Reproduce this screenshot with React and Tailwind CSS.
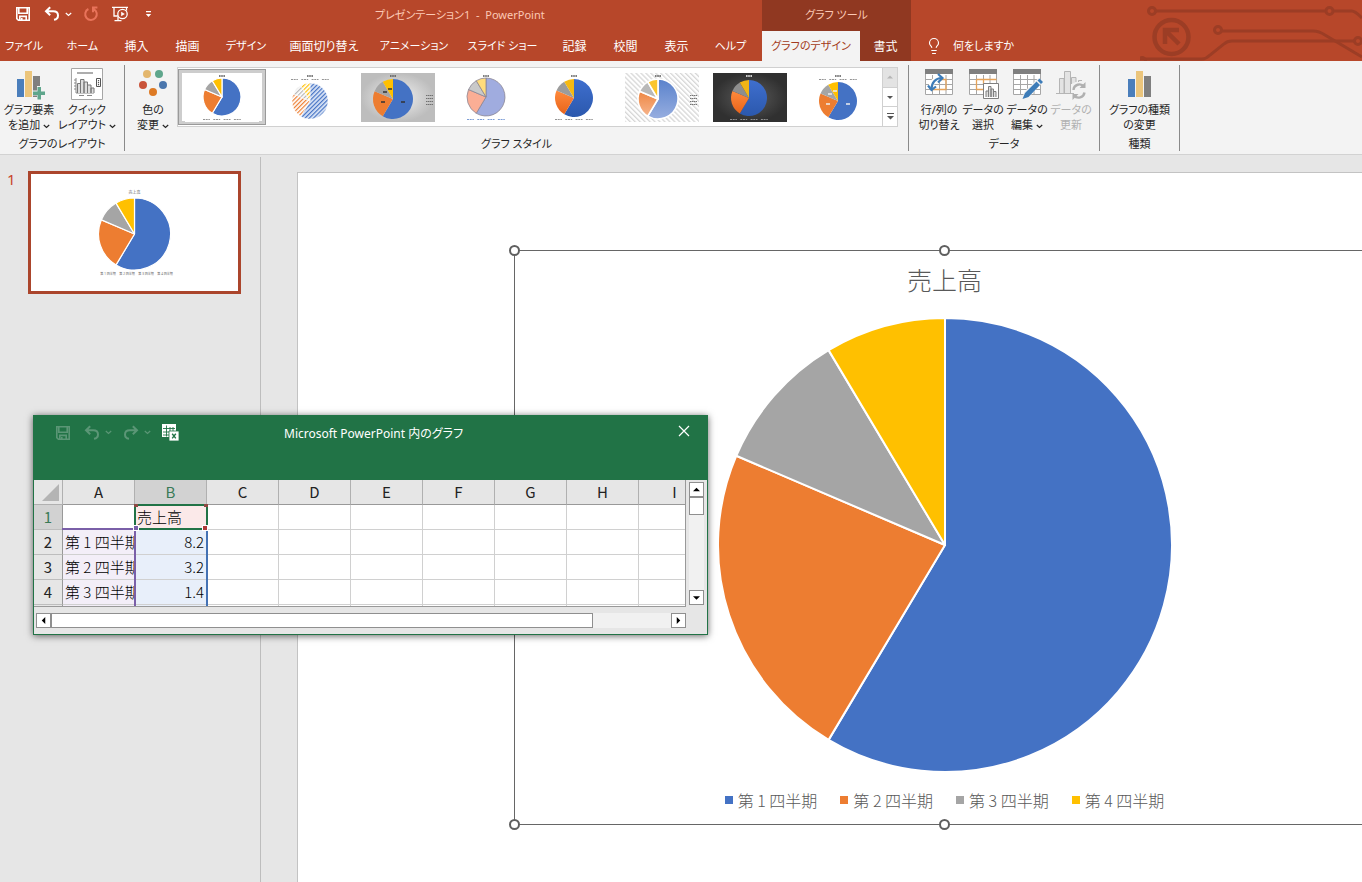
import { useState } from 'react';
import clsx from 'clsx';
import { Lightbulb } from 'lucide-react';

const SERIES = [
  { label: '第 1 四半期', value: 8.2 },
  { label: '第 2 四半期', value: 3.2 },
  { label: '第 3 四半期', value: 1.4 },
  { label: '第 4 四半期', value: 1.2 },
];
const COLORS = ['#4472c4', '#ed7d31', '#a5a5a5', '#ffc000'];
const SWATCHES = ['bg-[#4472c4]', 'bg-[#ed7d31]', 'bg-[#a5a5a5]', 'bg-[#ffc000]'];

// kana labels are set one size smaller than kanji ones
const TABS = [
  { label: 'ファイル', width: 'w-[48px]', kana: true },
  { label: 'ホーム', width: 'w-[69px]', kana: true },
  { label: '挿入', width: 'w-[39px]' },
  { label: '描画', width: 'w-[63px]' },
  { label: 'デザイン', width: 'w-[54px]', kana: true },
  { label: '画面切り替え', width: 'w-[102px]' },
  { label: 'アニメーション', width: 'w-[78px]', kana: true },
  { label: 'スライド ショー', width: 'w-[99px]', kana: true },
  { label: '記録', width: 'w-[45px]' },
  { label: '校閲', width: 'w-[57px]' },
  { label: '表示', width: 'w-[45px]' },
  { label: 'ヘルプ', width: 'w-[63px]', kana: true },
];

function slicePath(cx, cy, r, start, end) {
  const at = (t) => {
    const a = t * 2 * Math.PI;
    return `${(cx + r * Math.sin(a)).toFixed(2)} ${(cy - r * Math.cos(a)).toFixed(2)}`;
  };
  return `M${cx} ${cy}L${at(start)}A${r} ${r} 0 ${end - start > 0.5 ? 1 : 0} 1 ${at(end)}Z`;
}

function Pie({ cx, cy, r, fills = COLORS, stroke = '#fff', strokeWidth = 1 }) {
  const total = SERIES.reduce((sum, s) => sum + s.value, 0);
  let acc = 0;
  return (
    <g stroke={stroke} strokeWidth={strokeWidth} strokeLinejoin="round">
      {SERIES.map((s, i) => {
        const start = acc / total;
        acc += s.value;
        return <path key={s.label} d={slicePath(cx, cy, r, start, acc / total)} fill={fills[i]} />;
      })}
    </g>
  );
}

/* ---------- Chart style gallery ---------- */

const STYLES = [
  { cx: 37, cy: 24, r: 19, stroke: '#fff', sw: 1.2, legend: 'bottom' },
  { cx: 37, cy: 28, r: 18, stroke: '#fff', sw: 0.5, legend: 'top', fills: ['url(#h0)', 'url(#h1)', 'url(#h2)', 'url(#h3)'] },
  { cx: 32, cy: 26, r: 20, stroke: 'none', sw: 0, legend: 'right', bg: 'url(#grayBg)', tags: '#333' },
  { cx: 37, cy: 24, r: 19, stroke: '#8c8794', sw: 0.8, legend: 'bottom', legendColor: '#4472c4', fills: ['#a0acdf', '#fbae95', '#c9c9c9', '#ffdc7c'] },
  { cx: 37, cy: 25, r: 19, stroke: 'none', sw: 0, legend: 'bottom', fills: ['url(#g0)', 'url(#g1)', '#9c9c9c', '#f5b913'] },
  { cx: 33, cy: 26, r: 20, stroke: '#fff', sw: 1.6, legend: 'right', bg: 'url(#lightHatch)', fills: ['url(#s0)', 'url(#s1)', '#b9b9b9', '#fbc52c'] },
  { cx: 36, cy: 25, r: 18, stroke: 'none', sw: 0, legend: 'bottom', legendColor: '#bbb', titleColor: '#fff', bg: 'url(#darkBg)', fills: ['url(#g0)', 'url(#g1)', '#8e8e8e', '#f0b416'] },
  { cx: 37, cy: 28, r: 19, stroke: 'none', sw: 0, legend: 'top', tags: '#eee' },
];

const Hatch = ({ id, color, back = '#fff' }) => (
  <pattern id={id} width="3" height="3" patternUnits="userSpaceOnUse" patternTransform="rotate(45)">
    <rect width="3" height="3" fill={back} />
    <rect width="1.2" height="3" fill={color} />
  </pattern>
);

const Fade = ({ id, from, to }) => (
  <linearGradient id={id} x1="0" y1="0" x2="0" y2="1">
    <stop offset="0" stopColor={from} />
    <stop offset="1" stopColor={to} />
  </linearGradient>
);

function GalleryDefs() {
  return (
    <svg width="0" height="0" className="absolute" aria-hidden="true">
      <defs>
        <Hatch id="h0" color="#4472c4" back="#dce6f7" />
        <Hatch id="h1" color="#ed7d31" />
        <Hatch id="h2" color="#b5b5b5" />
        <Hatch id="h3" color="#ffc000" />
        <pattern id="lightHatch" width="3.5" height="3.5" patternUnits="userSpaceOnUse" patternTransform="rotate(-45)">
          <rect width="3.5" height="3.5" fill="#fff" />
          <rect width="1.3" height="3.5" fill="#d6d6d6" />
        </pattern>
        <radialGradient id="grayBg">
          <stop offset="0" stopColor="#f2f2f2" />
          <stop offset="1" stopColor="#bdbdbd" />
        </radialGradient>
        <radialGradient id="darkBg">
          <stop offset="0" stopColor="#5c5c5c" />
          <stop offset="1" stopColor="#303030" />
        </radialGradient>
        <Fade id="g0" from="#3f6fce" to="#2b58ad" />
        <Fade id="g1" from="#ff8a3c" to="#e8641b" />
        <Fade id="s0" from="#5a82cc" to="#97aee0" />
        <Fade id="s1" from="#ee8743" to="#f6b48c" />
      </defs>
    </svg>
  );
}

function StyleThumb({ s }) {
  const lc = s.legendColor || '#666';
  return (
    <svg width="74" height="49" viewBox="0 0 74 49" aria-hidden="true">
      <rect width="74" height="49" fill={s.bg || '#fff'} />
      <path d={`M${s.cx - 3} 3h6`} stroke={s.titleColor || '#555'} strokeWidth="1.3" strokeDasharray="1.6 .6" />
      <Pie cx={s.cx} cy={s.cy} r={s.r} fills={s.fills} stroke={s.stroke} strokeWidth={s.sw} />
      {s.legend === 'bottom' && <path d={`M${s.cx - 19} 46.5h38`} stroke={lc} strokeWidth=".7" strokeDasharray="2 .7 2 .7 1.500 3.400" />}
      {s.legend === 'top' && <path d={`M${s.cx - 19} 6.5h38`} stroke={lc} strokeWidth=".7" strokeDasharray="2 .7 2 .7 1.500 3.400" />}
      {s.legend === 'right' && <path d="M65 22.500h7M65 25.500h7M65 28.500h7M65 31.500h7" stroke={lc} strokeWidth=".9" strokeDasharray="1.500 .5" />}
      {s.tags && (
        <path
          d={`M${s.cx + 8} ${s.cy + 3}h4M${s.cx - 12} ${s.cy + 3}h4M${s.cx - 10} ${s.cy - 7}h4M${s.cx - 5} ${s.cy - 10}h4`}
          stroke={s.tags}
          strokeWidth="1.400"
        />
      )}
    </svg>
  );
}

/* ---------- Icons ---------- */

const SaveIcon = () => (
  <svg width="16" height="16" viewBox="0 0 16 16" fill="none" stroke="currentColor" strokeWidth="1.6">
    <path d="M1.8 1.8h12.4v12.4H3.4l-1.6-1.6zM3.8 2v5.2h8.4V2M4.8 14v-3.6h6.4V14M6.8 12v2.4" />
  </svg>
);

const UndoIcon = () => (
  <svg width="16" height="16" viewBox="0 0 16 16" fill="none" stroke="currentColor" strokeWidth="2">
    <path d="M6.2 1.2L2 5.2l4.2 4M2.4 5.2h6.8c3 0 4.8 1.8 4.8 4.2s-1.8 4-4 4.4" />
  </svg>
);

const RedoIcon = () => (
  <svg width="16" height="16" viewBox="0 0 16 16" fill="none" stroke="currentColor" strokeWidth="2">
    <path d="M9.8 1.2L14 5.2l-4.2 4M13.6 5.2H6.8C3.8 5.2 2 7 2 9.4s1.8 4 4 4.4" />
  </svg>
);

const RepeatIcon = () => (
  <svg width="16" height="16" viewBox="0 0 16 16" fill="none" stroke="currentColor" strokeWidth="2">
    <path d="M5.4 3A5.8 5.8 0 1 0 10.8 3.1M14.4 1.4H10v4.8" />
  </svg>
);

const PresentIcon = () => (
  <svg width="18" height="16" viewBox="0 0 18 16" fill="none" stroke="currentColor" strokeWidth="1.3">
    <path d="M1 1.3h16M3 1.5v8.5h4M3.5 14.6h7M7 11v3.5M15.5 1.500v3" />
    <circle cx="11.5" cy="8" r="4.7" />
    <path d="M10.2 5.8l3.6 2.2-3.6 2.2z" fill="currentColor" stroke="none" />
  </svg>
);

const CustomizeIcon = () => (
  <svg width="7" height="8" viewBox="0 0 7 8" fill="currentColor">
    <path d="M1 1h5v1.2H1zM.8 4h5.4L3.5 7z" />
  </svg>
);

const Chevron = () => (
  <svg width="7" height="5" viewBox="0 0 7 5" fill="none" stroke="currentColor" strokeWidth="1.2" className="inline-block">
    <path d="M.8 1l2.7 2.5L6.2 1" />
  </svg>
);

const GridGoIcon = () => (
  <svg width="17" height="17" viewBox="0 0 17 17" fill="none">
    <path d="M0 0h14v13H0z" fill="#fff" />
    <path d="M1 4.500h12M1 8h12M1 11h12M4.500 1.500v11M8 3v9M11 3v9" stroke="#217346" strokeWidth=".9" />
    <path d="M7 7h10v10H7z" fill="#fff" stroke="#217346" strokeWidth=".8" />
    <path d="M10.200 9.800l3.600 4.600M13.800 9.800l-3.600 4.600" stroke="#217346" strokeWidth="1.400" />
  </svg>
);

const Bars = () => (
  <>
    <path d="M4 11h7v18H4z" fill="#4a7ebb" />
    <path d="M12 3h7v26h-7z" fill="#ebc57c" />
    <path d="M20 8h7v21h-7z" fill="#7f7f7f" />
  </>
);

const BarsIcon = () => (
  <svg width="32" height="32" viewBox="0 0 32 32"><Bars /></svg>
);

const AddElementIcon = () => (
  <svg width="32" height="32" viewBox="0 0 32 32">
    <Bars />
    <path d="M24 18h5v4.500h4v5h-4V32h-5v-4.500h-4v-5h4z" fill="#f3f3f3" />
    <path d="M24.500 19H28v4.500h4v3.500h-4v4.500h-3.500V27H20v-3.500h4.500z" fill="#5fa68c" />
  </svg>
);

const QuickLayoutIcon = () => (
  <svg width="32" height="32" viewBox="0 0 32 32" fill="none">
    <path d="M.5.500h31v31H.5z" fill="#fff" stroke="#a6a6a6" />
    <path d="M6 5h16" stroke="#999" strokeWidth="1.600" />
    <path d="M5 10v15h18M3 12h2M3 15h2M3 18h2M3 21h2M8 27.500h5M16 27.500h5" stroke="#888" />
    <path d="M6.500 25V15.500h3V25M9.500 25V11.500h3.500V25M13 25V14h3.500v11M16.500 25v-8H20v8M20 25v-5h3v5" fill="#ddd" stroke="#777" />
    <path d="M25.500 10.500h4v8h-4z" fill="#fff" stroke="#555" />
    <path d="M27.500 12v1.200M27.500 14v1.200M27.500 16v1.200" stroke="#555" strokeWidth="1.200" />
  </svg>
);

const PaletteIcon = () => (
  <svg width="32" height="32" viewBox="0 0 32 32">
    <circle cx="10" cy="6" r="4" fill="#e3b66c" />
    <circle cx="22" cy="6" r="4" fill="#5fa68c" />
    <circle cx="6" cy="17" r="4" fill="#c9533a" />
    <circle cx="26" cy="17" r="4" fill="#4a76ac" />
    <circle cx="16" cy="24" r="4" fill="#dd7a24" />
  </svg>
);

const TableBase = () => (
  <>
    <path d="M2 2h28v25H2z" fill="#fff" />
    <path d="M2.500 6v20.500h27V6M2.500 11.500h27M2.500 16.500h27M2.500 21.500h27M9.500 7v19M16.500 7v19M23 7v19" fill="none" stroke="#a6a6a6" />
    <path d="M2 1h28v5H2z" fill="#7f7f7f" />
  </>
);

const SwitchIcon = () => (
  <svg width="32" height="32" viewBox="0 0 32 32" fill="none">
    <TableBase />
    <path d="M9.500 11.500h13.500v10H9.500z" stroke="#e5a35a" strokeWidth="1.300" />
    <path d="M7.500 21C8 14 12.500 10.500 18 10.500" stroke="#fff" strokeWidth="5" />
    <path d="M8.500 21c0-6 4-11 10-11" stroke="#3d7cb8" strokeWidth="2.200" />
    <path d="M15 6l4.500 4-4.500 4.500M5 17.500L8.500 22l4.500-3.500" stroke="#3d7cb8" strokeWidth="2.200" />
  </svg>
);

const SelectDataIcon = () => (
  <svg width="32" height="32" viewBox="0 0 32 32" fill="none">
    <TableBase />
    <path d="M9.500 11.500h20M9.500 11.500v10h8M16.500 11.500v5" stroke="#e5a35a" strokeWidth="1.300" />
    <path d="M16.500 15.500h15v15h-15z" fill="#fff" stroke="#7f7f7f" />
    <path d="M19 29v-6h2.500v6M21.500 29V18.500H24V29M24 29v-8h2.500v8M26.500 29v-5.500H29V29" fill="#ddd" stroke="#7f7f7f" />
  </svg>
);

const EditDataIcon = () => (
  <svg width="32" height="32" viewBox="0 0 32 32" fill="none">
    <TableBase />
    <path d="M27.500 10l4.500 4L18 29l-7 3 2-8z" fill="#f3f3f3" />
    <path d="M28.500 10.500l3.500 3.500-2 2-3.500-3.500zM25.500 13.500l3.500 3.500-11.500 12L11.500 31l2.500-6z" fill="#3d7cb8" />
  </svg>
);

const RefreshDataIcon = () => (
  <svg width="32" height="32" viewBox="0 0 32 32" fill="none">
    <path d="M1 25.500h18M4.500 25V10.500H9V25M9.500 25V3.500h6V25M16.500 16V9.500H21V14M23.500 14v-1.500H27" fill="#e3e3e3" stroke="#b5b5b5" />
    <path d="M18.500 22a6 6 0 0 1 10.500-3.500M29.500 24.500a6 6 0 0 1-10.500 3" stroke="#b0b0b0" strokeWidth="2.400" />
    <path d="M30.500 14v6h-6zM17.500 32v-6h6z" fill="#b0b0b0" />
  </svg>
);

const Triangle = ({ dir = 'down', size = 8 }) => (
  <svg width={size} height={size} viewBox="0 0 8 8" fill="currentColor">
    {dir === 'down' && <path d="M0 2.500h8L4 6.500z" />}
    {dir === 'up' && <path d="M0 6h8L4 2z" />}
    {dir === 'left' && <path d="M6 0v8L2 4z" />}
    {dir === 'right' && <path d="M2 0v8l4-4z" />}
    {dir === 'more' && <path d="M0 0h8v1H0zM0 3.500h8L4 7.500z" />}
  </svg>
);

function Circuit() {
  return (
    <svg width="222" height="61" viewBox="0 0 222 61" fill="none" stroke="#9c3d25" strokeWidth="3" className="pointer-events-none absolute right-0 top-0" aria-hidden="true">
      <circle cx="12" cy="11" r="3.500" />
      <circle cx="189.500" cy="11" r="3.500" />
      <path d="M16 11h169.500M193.500 11H212q3 0 10 7" />
      <circle cx="78" cy="30" r="3.500" />
      <path d="M82 31h91q6 0 12 4l37 22" />
      <circle cx="218" cy="41" r="3.500" />
      <path d="M214 41H92q-5 0-8 3L70 55q-4 4-8 4H0" />
      <circle cx="2" cy="61" r="3.500" />
      <circle cx="31.500" cy="37" r="17" strokeWidth="4.500" />
      <path d="M25 44V30h14M26 31l13 13" strokeWidth="4.500" />
    </svg>
  );
}

/* ---------- Ribbon ---------- */

function RibbonGroup({ label, className, children }) {
  return (
    <section aria-label={label} className={clsx('flex h-[86px] shrink-0 flex-col border-r border-[#8a8a8a]', className)}>
      <div className="flex">{children}</div>
      <p className="mt-auto text-center">{label}</p>
    </section>
  );
}

function BigButton({ icon, lines, menu, disabled, className }) {
  return (
    <button type="button" disabled={disabled} className={clsx('flex shrink-0 flex-col items-center gap-0.5 whitespace-nowrap pt-[3px]', disabled && 'text-[#b1b1b1]', className)}>
      {icon}
      <span>
        {lines[0]}
        <br />
        {lines[1]}
        {menu && <> <Chevron /></>}
      </span>
    </button>
  );
}

function Ribbon() {
  const [style, setStyle] = useState(0);
  return (
    <div className="flex overflow-hidden border-b border-[#d2d2d2] bg-[#f3f3f3] pb-[3px] pt-1 text-[11px] leading-[15px] text-[#262626]">
      <RibbonGroup label="グラフのレイアウト" className="w-[125px]">
        <BigButton icon={<AddElementIcon />} lines={['グラフ要素', 'を追加']} menu className="w-[58px]" />
        <BigButton icon={<QuickLayoutIcon />} lines={['クイック', 'レイアウト']} menu className="w-[58px]" />
      </RibbonGroup>

      <RibbonGroup label="グラフ スタイル" className="w-[784px]">
        <BigButton icon={<PaletteIcon />} lines={['色の', '変更']} menu className="ml-1 w-[48px]" />
        <div className="mt-[2px] flex h-[60px] border border-[#d0d0d0] bg-white">
          {STYLES.map((s, i) => (
            <button key={i} type="button" aria-label={`スタイル ${i + 1}`} aria-pressed={style === i} onClick={() => setStyle(i)}
              className={clsx('my-px flex w-[88px] items-center justify-center border', style === i ? 'border-[#9a9a9a] ring-[3px] ring-inset ring-[#cdcdcd]' : 'border-transparent')}>
              <StyleThumb s={s} />
            </button>
          ))}
          <div className="flex w-[15px] flex-col divide-y divide-[#d0d0d0] border-l border-[#d0d0d0] text-[#555]">
            <button type="button" aria-label="前へ" disabled className="flex flex-1 items-center justify-center bg-[#e3e3e3] text-[#b5b5b5]"><Triangle dir="up" size={6} /></button>
            <button type="button" aria-label="次へ" className="flex flex-1 items-center justify-center"><Triangle size={6} /></button>
            <button type="button" aria-label="その他" className="flex flex-1 items-center justify-center"><Triangle dir="more" size={7} /></button>
          </div>
        </div>
      </RibbonGroup>

      <RibbonGroup label="データ" className="w-[191px]">
        <BigButton icon={<SwitchIcon />} lines={['行/列の', '切り替え']} className="ml-2 w-[44px]" />
        <BigButton icon={<SelectDataIcon />} lines={['データの', '選択']} className="w-[44px]" />
        <BigButton icon={<EditDataIcon />} lines={['データの', '編集']} menu className="w-[44px]" />
        <BigButton icon={<RefreshDataIcon />} lines={['データの', '更新']} disabled className="w-[44px]" />
      </RibbonGroup>

      <RibbonGroup label="種類" className="w-[80px]">
        <BigButton icon={<BarsIcon />} lines={['グラフの種類', 'の変更']} className="w-full" />
      </RibbonGroup>
    </div>
  );
}

function Header() {
  return (
    <header className="relative flex h-[61px] overflow-hidden bg-[#b7472a] text-[12px] text-white">
      <div className="flex shrink-0 flex-col">
        <div className="flex h-[31px] items-center">
          <div className="flex w-[375px] items-center pb-[3px] pl-[15px]">
            <button type="button" aria-label="上書き保存"><SaveIcon /></button>
            <button type="button" aria-label="元に戻す" className="ml-[13px] flex items-center gap-[5px]"><UndoIcon /><Chevron /></button>
            <button type="button" aria-label="繰り返し" className="ml-[11px] text-[#e8735a]"><RepeatIcon /></button>
            <button type="button" aria-label="スライド ショーの開始" className="ml-3"><PresentIcon /></button>
            <button type="button" aria-label="クイック アクセスのカスタマイズ" className="ml-4"><CustomizeIcon /></button>
          </div>
          <h1 className="whitespace-pre text-[11px] text-[#fcc9b5]">プレゼンテーション1  -  PowerPoint</h1>
        </div>
        <nav className="flex h-[30px] pt-px">
          {TABS.map((t) => (
            <button key={t.label} type="button" className={clsx('shrink-0 whitespace-nowrap', t.width, t.kana && 'text-[11px]')}>{t.label}</button>
          ))}
        </nav>
      </div>
      <div className="flex w-[149px] shrink-0 flex-col bg-[#903821]">
        <p className="flex h-[31px] items-center justify-center text-[11px] text-[#fcc9b5]">グラフ ツール</p>
        <div className="flex h-[30px]">
          <button type="button" className="w-[98px] whitespace-nowrap bg-[#f3f3f3] pt-px text-[11px] text-[#a33b20]">グラフのデザイン</button>
          <button type="button" className="flex-1 pt-px">書式</button>
        </div>
      </div>
      <label className="mt-[31px] flex h-[30px] items-center gap-[10px] pl-[14px]">
        <Lightbulb size={18} strokeWidth={1.5} />
        <input type="text" aria-label="操作アシスト" placeholder="何をしますか" className="w-[120px] bg-transparent text-[11px] outline-none placeholder:text-white" />
      </label>
      <Circuit />
    </header>
  );
}

/* ---------- Workspace ---------- */

function SlidePane() {
  return (
    <aside className="mt-0.5 flex w-[261px] shrink-0 items-start border-r border-[#bdbdbd] pl-[7px] pt-[14px]">
      <span className="w-[21px] text-[15px] leading-4 text-[#c8452b]">1</span>
      <button type="button" aria-label="スライド 1" className="border-[3px] border-[#ab452c] bg-white">
        <svg width="207" height="117" viewBox="0 0 207 117" fill="#666" textAnchor="middle" fontSize="4">
          <text x="103.500" y="20">売上高</text>
          <Pie cx={103.5} cy={60} r={36} strokeWidth={1.2} />
          {SERIES.map((s, i) => (
            <text key={s.label} x={77 + i * 19} y="101" fontSize="3">{s.label}</text>
          ))}
        </svg>
      </button>
    </aside>
  );
}

const Handle = ({ className }) => (
  <span className={clsx('absolute size-[11px] rounded-full border-2 border-[#5f5f5f] bg-white', className)} />
);

function Slide() {
  return (
    <main className="ml-[36px] mt-[17px] min-w-0 flex-1 overflow-hidden border-l border-t border-[#c3c3c3] bg-white pl-[216px] pt-[77px]">
      <figure className="relative flex w-[861px] flex-col items-center border border-[#666] pb-3 pt-[11px] font-['Noto_Sans_CJK_JP',sans-serif] font-light text-[#595959]">
        <Handle className="-left-1.5 -top-1.5" />
        <Handle className="-top-1.5 left-[424px]" />
        <Handle className="-bottom-1.5 -left-1.5" />
        <Handle className="-bottom-1.5 left-[424px]" />
        <figcaption className="text-[25px] leading-[34px]">売上高</figcaption>
        <svg width="456" height="456" viewBox="0 0 456 456" className="mt-[21px]" role="img" aria-label="売上高">
          <Pie cx={228} cy={228} r={227} strokeWidth={2} />
        </svg>
        <ul className="mt-[15px] flex gap-[23px]">
          {SERIES.map((s, i) => (
            <li key={s.label} className="flex items-center gap-[5px] whitespace-nowrap text-[16px] leading-6">
              <span className={clsx('size-2', SWATCHES[i])} />
              {s.label}
            </li>
          ))}
        </ul>
      </figure>
    </main>
  );
}

/* ---------- Embedded sheet window ---------- */

const COLS = ['A', 'B', 'C', 'D', 'E', 'F', 'G', 'H', 'I'];
const ROWS = [
  ['', '売上高'],
  ['第 1 四半期', '8.2'],
  ['第 2 四半期', '3.2'],
  ['第 3 四半期', '1.4'],
  ['', ''],
];

function Sheet() {
  return (
    <div className="h-[127px] w-[652px] overflow-hidden border-b border-r border-[#999]">
      <table className="w-[677px] table-fixed border-separate border-spacing-0 font-['Noto_Sans_CJK_JP',sans-serif] text-[15px] leading-6">
        <colgroup>
          <col className="w-[29px]" />
          {COLS.map((c) => <col key={c} className="w-[72px]" />)}
        </colgroup>
        <thead>
          <tr className="h-[25px] bg-[#e6e6e6]">
            <th aria-label="すべて選択" className="border-b border-r border-[#b0b0b0] p-0">
              <svg width="28" height="24" viewBox="0 0 28 24" className="block"><path d="M25 4v17H8z" fill="#b4b4b4" /></svg>
            </th>
            {COLS.map((c) => (
              <th key={c} scope="col" className={clsx('border-b border-r border-b-[#999] border-r-[#b0b0b0] p-0 font-normal', c === 'B' ? 'bg-[#d2d2d2] text-[#3a7a56]' : 'text-[#222]')}>{c}</th>
            ))}
          </tr>
        </thead>
        <tbody>
          {ROWS.map((row, r) => (
            <tr key={r} className="h-[25px] bg-white">
              <th scope="row" className={clsx('border-b border-r border-b-[#bdbdbd] border-r-[#999] p-0 font-normal', r === 0 ? 'bg-[#d2d2d2] text-[#3a7a56]' : 'bg-[#e6e6e6] text-[#222]')}>{r < 4 ? r + 1 : ''}</th>
              {COLS.map((c, i) => (
                <td key={c} className={clsx('relative whitespace-nowrap border-b border-r border-[#d0d0d0] p-0 font-light text-black',
                  i === 0 && r > 0 && 'bg-[#f3eef8]',
                  i === 1 && r > 0 && 'bg-[#e8effa] pr-[2px] text-right',
                  i === 1 && r === 0 && 'bg-[#fbe9e9]')}>
                  <div className={clsx('h-6 overflow-hidden', (i === 0 || (i === 1 && r === 0)) && 'pl-[2px]')}>{row[i]}</div>
                  {i === 0 && r > 0 && <span className={clsx('absolute -bottom-px -right-0.5 z-10 border-r-2 border-[#7a5fa8]', r === 1 ? '-left-px -top-0.5 border-t-2' : 'left-0 -top-px')} />}
                  {i === 1 && r > 0 && <span className="absolute -bottom-px -right-0.5 top-0 z-10 border-r-2 border-[#4472b4]" />}
                  {i === 1 && r === 0 && (
                    <>
                      <span className="absolute -bottom-px -left-px -right-0.5 -top-px z-10 border-2 border-[#217346]" />
                      <span className="absolute -left-px -top-px z-20 h-[3px] w-1 bg-[#8c4a44]" />
                      <span className="absolute -right-0.5 -top-px z-20 h-[3px] w-1 bg-[#8c4a44]" />
                      <span className="absolute -bottom-0.5 -left-0.5 z-20 size-[6px] border border-white bg-[#7a5fa8]" />
                      <span className="absolute -bottom-0.5 -right-0.5 z-20 size-[6px] border border-white bg-[#b03a3a]" />
                    </>
                  )}
                </td>
              ))}
            </tr>
          ))}
        </tbody>
      </table>
    </div>
  );
}

const ScrollButton = ({ dir, label }) => (
  <button type="button" aria-label={label} className="flex size-[15px] shrink-0 items-center justify-center border border-[#8f8f8f] bg-white text-black">
    <Triangle dir={dir} size={7} />
  </button>
);

function SheetWindow() {
  return (
    <section aria-label="Microsoft PowerPoint 内のグラフ" className="absolute left-[33px] top-[260px] z-30 w-[675px] border border-[#217346] bg-[#e6e6e6] pb-[6px] shadow-[0_1px_7px_rgba(0,0,0,0.6)]">
      <div className="flex h-[64px] items-start bg-[#217346] text-[12px] text-white">
        <div className="flex w-[250px] items-center pl-[21px] pt-[8px] text-[#5b9676]">
          <button type="button" aria-label="上書き保存" disabled><SaveIcon /></button>
          <button type="button" aria-label="元に戻す" disabled className="ml-[13px] flex items-center gap-[5px]"><UndoIcon /><Chevron /></button>
          <button type="button" aria-label="やり直し" disabled className="ml-[11px] flex items-center gap-[5px]"><RedoIcon /><Chevron /></button>
          <button type="button" aria-label="Excel でデータを編集" className="ml-[11px]"><GridGoIcon /></button>
        </div>
        <h2 className="flex-1 pt-[9px] leading-[18px]">Microsoft PowerPoint 内のグラフ</h2>
        <button type="button" aria-label="閉じる" className="mr-[17px] mt-[9px]">
          <svg width="12" height="12" viewBox="0 0 12 12" stroke="currentColor" strokeWidth="1.200"><path d="M1 1l10 10M11 1L1 11" /></svg>
        </button>
      </div>
      <div className="flex gap-[3px]">
        <Sheet />
        <div className="mt-[2px] flex h-[123px] flex-col bg-[#f1f1f1]">
          <ScrollButton dir="up" label="上へスクロール" />
          <div className="h-[18px] border border-[#8f8f8f] bg-white" />
          <div className="flex-1" />
          <ScrollButton dir="down" label="下へスクロール" />
        </div>
      </div>
      <div className="ml-[2px] mt-[6px] flex w-[650px] bg-[#f1f1f1]">
        <ScrollButton dir="left" label="左へスクロール" />
        <div className="w-[542px] border border-[#8f8f8f] bg-white" />
        <div className="flex-1" />
        <ScrollButton dir="right" label="右へスクロール" />
      </div>
    </section>
  );
}

export default function App() {
  return (
    <div className="flex min-h-screen flex-col overflow-hidden bg-[#e6e6e6] font-['Noto_Sans','Noto_Sans_CJK_JP',sans-serif] [font-feature-settings:'palt']">
      <GalleryDefs />
      <Header />
      <Ribbon />
      <div className="relative flex flex-1">
        <SlidePane />
        <Slide />
        <SheetWindow />
      </div>
    </div>
  );
}
